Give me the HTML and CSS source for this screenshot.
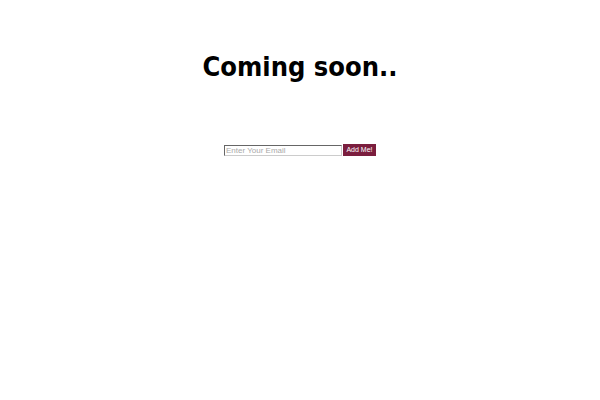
FILE: index.html
```html
<!DOCTYPE html>
<html>
<head>
<meta charset="utf-8">
<link rel="stylesheet" href="styles.css">
</head>
<body>
<div class="page">
  <h1 class="title">Coming soon..</h1>
  <form class="signup">
    <input class="email" type="text" placeholder="Enter Your Email">
    <button class="add" type="button">Add Me!</button>
  </form>
</div>
</body>
</html>
```

FILE: styles.css
```css
html, body {
  margin: 0;
  padding: 0;
  background: #fff;
}
.page {
  display: flex;
  flex-direction: column;
  align-items: center;
}
.title {
  margin: 51px 0 0;
  font-family: "DejaVu Sans Condensed", "DejaVu Sans", sans-serif;
  font-stretch: condensed;
  font-size: 27px;
  font-weight: bold;
  line-height: 32px;
  color: #000;
}
.signup {
  margin-top: 61px;
  display: flex;
  align-items: center;
  gap: 1px;
}
.email {
  box-sizing: border-box;
  width: 118px;
  height: 11px;
  padding: 0 1px;
  border: 1px solid #666;
  border-right-color: #ccc;
  border-bottom-color: #ccc;
  font-family: "Liberation Sans", Arial, sans-serif;
  font-size: 8px;
  outline: none;
}
.email::placeholder {
  color: #aaa;
}
.add {
  box-sizing: border-box;
  height: 12px;
  width: 33px;
  padding: 0;
  border: none;
  background: #7b1e3e;
  color: #fff;
  font-family: "Liberation Sans", Arial, sans-serif;
  font-size: 7px;
  line-height: 12px;
}
```
